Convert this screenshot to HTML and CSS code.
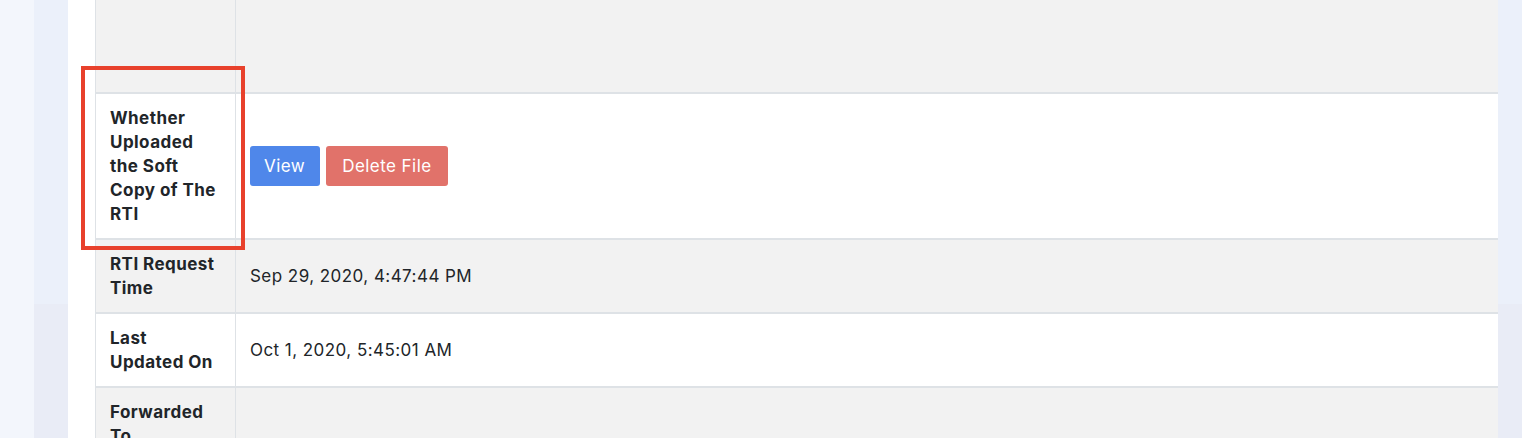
FILE: index.html
```html
<!DOCTYPE html>
<html>
<head>
<meta charset="utf-8">
<link rel="stylesheet" href="styles.css">
</head>
<body>
<div class="page">
  <div class="gutter"></div>
  <div class="shell">
    <div class="panel">
      <table class="detail">
        <tr class="odd first">
          <th></th>
          <td></td>
        </tr>
        <tr class="even">
          <th>Whether Uploaded the Soft Copy of The RTI</th>
          <td>
            <div class="actions">
              <button class="btn btn-view">View</button>
              <button class="btn btn-delete">Delete File</button>
            </div>
          </td>
        </tr>
        <tr class="odd">
          <th>RTI Request Time</th>
          <td>Sep 29, 2020, 4:47:44 PM</td>
        </tr>
        <tr class="even">
          <th>Last Updated On</th>
          <td>Oct 1, 2020, 5:45:01 AM</td>
        </tr>
        <tr class="odd">
          <th>Forwarded To</th>
          <td></td>
        </tr>
      </table>
    </div>
  </div>
  <div class="highlight"></div>
</div>
</body>
</html>
```
FILE: styles.css
```css
* { box-sizing: border-box; }
html, body { margin: 0; padding: 0; }
body {
  background: #f3f6fc;
  font-family: Inter, "Liberation Sans", sans-serif;
  color: #212529;
  overflow: hidden;
  height: 438px;
}
.page {
  position: relative;
  display: flex;
  height: 438px;
}
.gutter { width: 34px; flex: none; }
.shell {
  flex: 1;
  padding-left: 34px;
  padding-right: 24px;
  background: linear-gradient(to bottom, #ebf0fa 0, #ebf0fa 304px, #e9ecf6 304px);
}
.panel {
  background: #fff;
  height: 100%;
  padding-left: 27px;
}
.detail {
  width: 100%;
  border-collapse: separate;
  border-spacing: 0;
  font-size: 17px;
  line-height: 24px;
  letter-spacing: 0.45px;
}
.detail th, .detail td {
  border-bottom: 2px solid #dee2e6;
  padding: 12px 12px 12px 14px;
  vertical-align: middle;
  text-align: left;
}
.detail th {
  width: 141px;
  font-weight: 700;
  border-left: 1px solid #dee2e6;
  border-right: 1px solid #dee2e6;
}
.detail tr.odd { background: #f2f2f2; }
.detail tr.even { background: #fff; }
.detail tr.first th, .detail tr.first td { height: 94px; padding: 0; }
.actions { display: flex; gap: 6px; }
.btn {
  font-family: inherit;
  font-size: 17px;
  line-height: 24px;
  letter-spacing: 0.45px;
  color: #fff;
  border: none;
  border-radius: 3px;
  padding: 8px 15px 8px 14px;
  cursor: pointer;
}
.btn-view { background: #4f87ea; }
.btn-delete { background: #e1726a; padding: 8px 16px 8px 16px; }
.highlight {
  position: absolute;
  left: 81px;
  top: 66px;
  width: 164px;
  height: 184px;
  border: 4px solid #e8412c;
}
```
